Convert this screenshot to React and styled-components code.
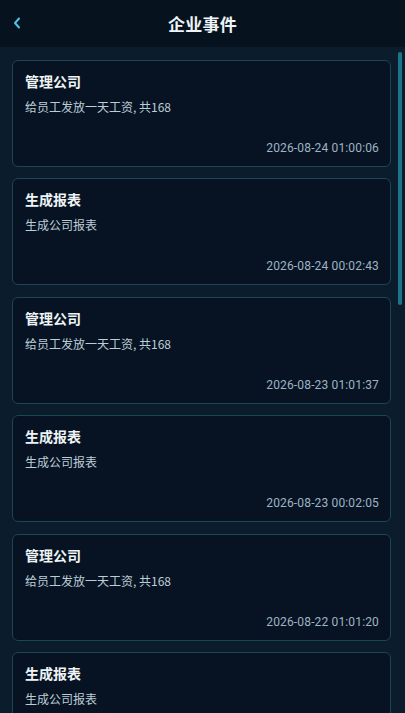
import React from "react";
import styled, { createGlobalStyle } from "styled-components";

const events = [
  { title: "管理公司", desc: "给员工发放一天工资, 共168", time: "2026-08-24 01:00:06" },
  { title: "生成报表", desc: "生成公司报表", time: "2026-08-24 00:02:43" },
  { title: "管理公司", desc: "给员工发放一天工资, 共168", time: "2026-08-23 01:01:37" },
  { title: "生成报表", desc: "生成公司报表", time: "2026-08-23 00:02:05" },
  { title: "管理公司", desc: "给员工发放一天工资, 共168", time: "2026-08-22 01:01:20" },
  { title: "生成报表", desc: "生成公司报表", time: "2026-08-22 00:02:11" },
];

const App = () => {
  return (
    <>
      <GlobalStyle />
      <Page>
        <Header>
          <Back>
            <svg width="10" height="14" viewBox="0 0 10 14">
              <path
                d="M7 2.5 L3 7 L7 11.5"
                fill="none"
                stroke="#4cc3e6"
                strokeWidth="2"
                strokeLinecap="round"
                strokeLinejoin="round"
              />
            </svg>
          </Back>
          <Title>企业事件</Title>
        </Header>
        <Body>
          <List>
            {events.map((e, i) => (
              <Card key={i}>
                <CardTitle>{e.title}</CardTitle>
                <CardDesc>{e.desc}</CardDesc>
                <CardTime>{e.time}</CardTime>
              </Card>
            ))}
          </List>
          <ScrollThumb />
        </Body>
      </Page>
    </>
  );
};

export default App;

const GlobalStyle = createGlobalStyle`
  html, body {
    margin: 0;
    padding: 0;
    background: #0b1c2c;
  }
  body {
    font-family: "Noto Sans CJK SC", "Noto Sans", sans-serif;
  }
`;

const Page = styled.div`
  width: 405px;
  height: 713px;
  overflow: hidden;
  display: flex;
  flex-direction: column;
  background: #0b1c2c;
`;

const Header = styled.div`
  position: relative;
  height: 47px;
  flex-shrink: 0;
  display: flex;
  align-items: center;
  justify-content: center;
  background: #07121f;
`;

const Back = styled.div`
  position: absolute;
  left: 10px;
  top: 15px;
  width: 14px;
  height: 16px;
  display: flex;
  align-items: center;
  justify-content: center;
`;

const Title = styled.h1`
  margin: 0;
  font-size: 17px;
  font-weight: 700;
  color: #eef3f6;
  letter-spacing: 0.3px;
`;

const Body = styled.div`
  position: relative;
  flex: 1;
  overflow: hidden;
`;

const List = styled.div`
  display: flex;
  flex-direction: column;
  gap: 11.4px;
  padding: 13px 14px 0 12px;
`;

const Card = styled.div`
  height: 107px;
  box-sizing: border-box;
  display: flex;
  flex-direction: column;
  padding: 10px 11px 9px 12px;
  background: #071322;
  border: 1px solid #1a4656;
  border-radius: 6px;
  flex-shrink: 0;
`;

const CardTitle = styled.div`
  font-size: 14px;
  line-height: 20px;
  font-weight: 700;
  color: #eef3f6;
`;

const CardDesc = styled.div`
  margin-top: 7px;
  font-size: 12px;
  line-height: 18px;
  color: #bccdd8;
`;

const CardTime = styled.div`
  margin-top: auto;
  text-align: right;
  font-family: "Roboto", "Noto Sans", sans-serif;
  font-size: 12px;
  line-height: 18px;
  letter-spacing: 0.15px;
  color: #9fb4c4;
`;

const ScrollThumb = styled.div`
  position: absolute;
  right: 3px;
  top: 5px;
  width: 4px;
  height: 253px;
  border-radius: 2px;
  background: #1c7488;
`;
